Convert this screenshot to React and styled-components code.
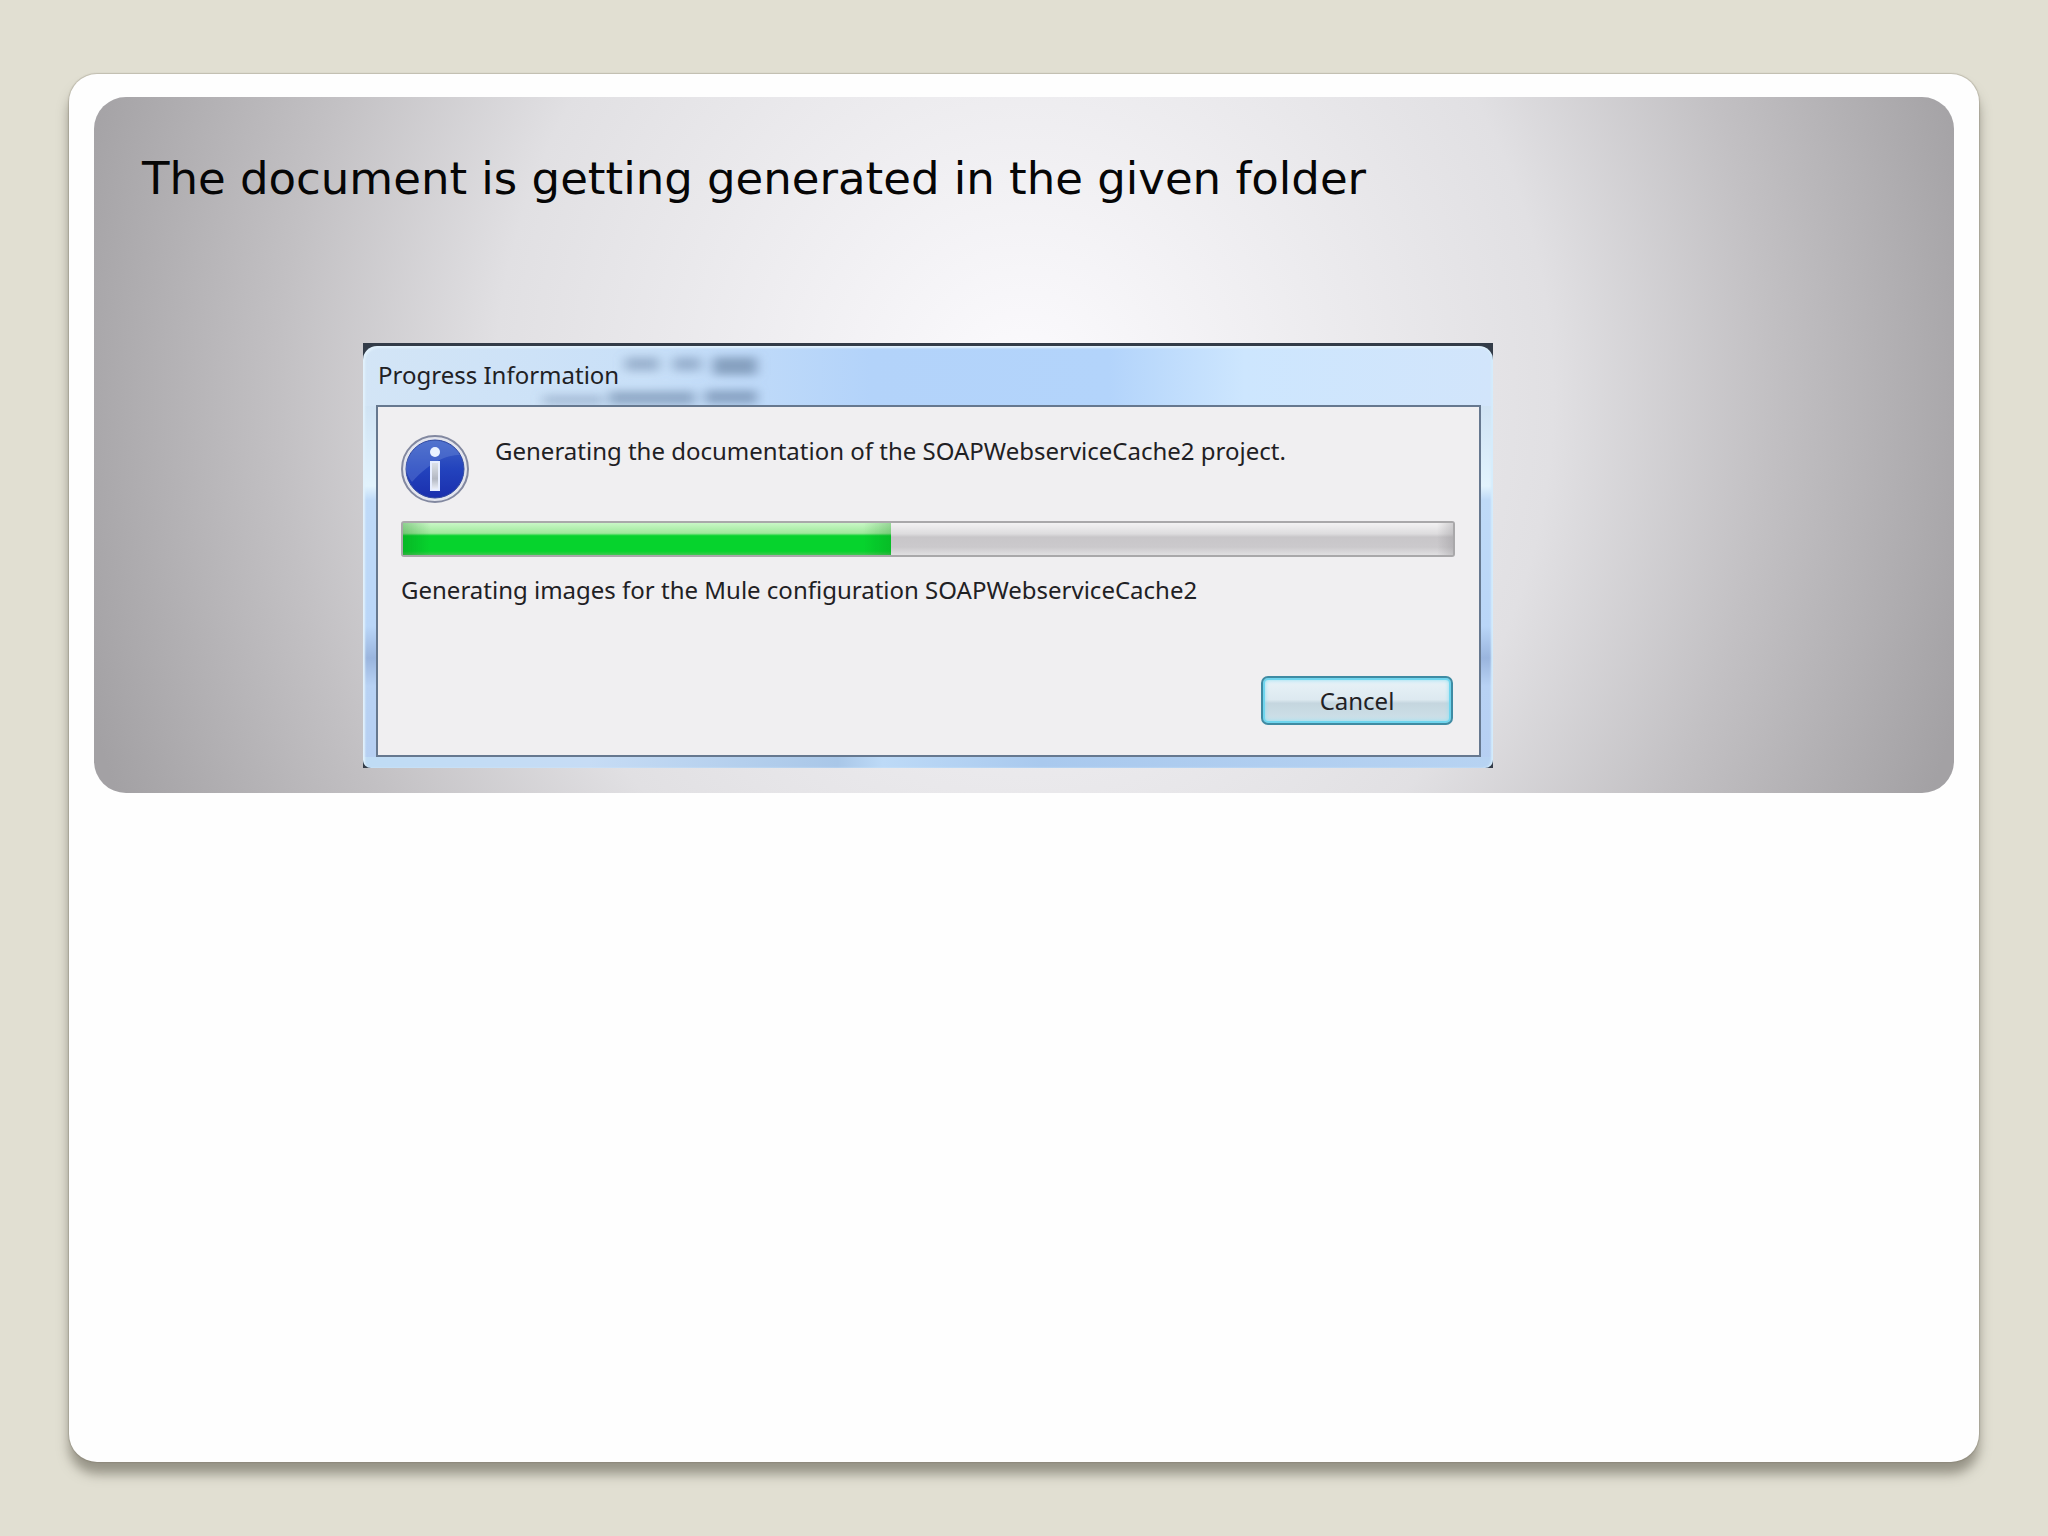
import React from 'react'
import styled, { createGlobalStyle } from 'styled-components'

const vars = {
  page: '#e1dfd2',
  ink: '#1f2124',
  titleFont: "Verdana, 'DejaVu Sans', sans-serif",
  uiFont: "'Segoe UI', 'Noto Sans', 'Open Sans', sans-serif",
}

const InfoIcon = () => (
  <svg viewBox='0 0 68 68' width='68' height='68' aria-hidden='true'>
    <defs>
      <linearGradient id='ball' x1='0' y1='0' x2='0' y2='1'>
        <stop offset='0' stopColor='#3f62c6' />
        <stop offset='0.5' stopColor='#2343bd' />
        <stop offset='1' stopColor='#1a2fae' />
      </linearGradient>
      <linearGradient id='stem' x1='0' y1='0' x2='0' y2='1'>
        <stop offset='0' stopColor='#dfe3ea' />
        <stop offset='0.6' stopColor='#b3b8c2' />
        <stop offset='1' stopColor='#eef2fb' />
      </linearGradient>
    </defs>
    <circle cx='34' cy='34' r='33' fill='#e3e5ee' stroke='#8288a0' strokeWidth='2' />
    <circle cx='34' cy='34' r='29' fill='url(#ball)' stroke='#3149a0' strokeWidth='1' />
    <path d='M5 34a29 29 0 0 1 54-14C46 20 30 26 11 47a29 29 0 0 1-6-13z' fill='#7f9be0' opacity='0.3' />
    <circle cx='34' cy='17' r='5' fill='#eaf2ff' />
    <rect x='30' y='27' width='8' height='28' fill='url(#stem)' stroke='#e6edff' strokeWidth='2' />
  </svg>
)

const ProgressDialog = ({ title, message, task, value }) => {
  return (
    <Frame>
      <Glass role='dialog' aria-labelledby='dialog-title'>
        <TitleBar>
          <Reflection viewBox='0 0 1130 59' preserveAspectRatio='xMinYMin slice' aria-hidden='true'>
            <defs>
              <filter id='smear' x='-10%' y='-50%' width='120%' height='200%'>
                <feGaussianBlur stdDeviation='6 4' />
              </filter>
            </defs>
            <g filter='url(#smear)' fill='#6d87a8'>
              <rect x='262' y='11' width='34' height='14' opacity='0.5' />
              <rect x='310' y='11' width='28' height='14' opacity='0.5' />
              <rect x='350' y='11' width='44' height='18' opacity='0.7' />
              <rect x='180' y='49' width='60' height='10' opacity='0.4' />
              <rect x='246' y='45' width='86' height='14' opacity='0.6' />
              <rect x='342' y='44' width='52' height='14' opacity='0.65' />
            </g>
          </Reflection>
          <h2 id='dialog-title'>{title}</h2>
        </TitleBar>
        <Body>
          <Message>
            <InfoIcon />
            <p>{message}</p>
          </Message>
          <Progress aria-labelledby='task' max='100' value={value} />
          <Task id='task'>{task}</Task>
          <Actions>
            <Button type='button'>Cancel</Button>
          </Actions>
        </Body>
      </Glass>
    </Frame>
  )
}

const App = () => {
  return (
    <Page>
      <GlobalStyle />
      <Slide>
        <Panel>
          <Heading>The document is getting generated in the given folder</Heading>
          <ProgressDialog
            title='Progress Information'
            message='Generating the documentation of the SOAPWebserviceCache2 project.'
            task='Generating images for the Mule configuration SOAPWebserviceCache2'
            value={46.5}
          />
        </Panel>
      </Slide>
    </Page>
  )
}

const GlobalStyle = createGlobalStyle`
* {
  box-sizing: border-box;
}

body {
  margin: 0;
  background-color: ${vars.page};
}

h1, h2, p {
  margin: 0;
  font-weight: 400;
}
`

const Page = styled.div`
display: flex;
min-height: 100vh;
padding: 74px 69px;
`

const Slide = styled.main`
flex: 1;
padding: 23px 25px;
border-radius: 28px;
background-color: #fefefe;
box-shadow: 0 0 1px 1px rgba(120, 112, 95, .3), 0 12px 12px rgba(90, 86, 72, .55);
`

const Panel = styled.section`
padding: 54px 48px 25px;
border-radius: 32px;
background: radial-gradient(ellipse 980px 1050px at 50% 43%, #fcfbfe 0%, #e1e0e3 54%, #c2c0c3 76%, #a3a1a4 100%);
`

const Heading = styled.h1`
font-family: ${vars.titleFont};
font-size: 45px;
line-height: 56px;
color: #060606;
`

const Frame = styled.div`
max-width: 1130px;
margin: 136px 0 0 221px;
padding-top: 3px;
background-color: #333c48;
`

const Glass = styled.div`
padding: 0 12px 11px 13px;
border-radius: 14px 14px 8px 8px;
background:
  linear-gradient(to right, #d3e5f6 0%, #c9e0f8 25%, #b3d3fa 45%, #b3d4fb 66%, #cde6fe 78%, #d2e5fb 100%) top / 100% 60px no-repeat,
  linear-gradient(to right, #bfdcf5 0%, #c6dcf5 20%, #a9c7e8 42%, #bddaf7 46%, #a9c9ee 60%, #b7d3f2 100%) bottom / 100% 11px no-repeat,
  linear-gradient(#d0e3f4 60px, #e2f3fd 140px, #bfdaf8 154px, #bad6f8 280px, #9ab5de 312px, #b8d2f4 340px, #b6cff2 100%);
box-shadow: inset 2px 2px 2px #e2f2fc, inset -2px 0 2px #d4ecfc;
`

const TitleBar = styled.header`
position: relative;
display: flex;
align-items: center;
height: 59px;
padding: 0 0 2px 2px;

h2 {
  position: relative;
  font-family: ${vars.uiFont};
  font-size: 24px;
  line-height: 32px;
  color: ${vars.ink};
}
`

const Reflection = styled.svg`
position: absolute;
top: 0;
left: -13px;
width: 1130px;
height: 59px;
`

const Body = styled.div`
position: relative;
padding: 28px 24px 30px 23px;
border: 2px solid #66788f;
background-color: #f0eff1;
font-family: ${vars.uiFont};
font-size: 24px;
line-height: 32px;
color: ${vars.ink};
`

const Message = styled.div`
display: flex;
gap: 26px;

svg {
  flex-shrink: 0;
}
`

const Progress = styled.progress`
display: block;
appearance: none;
width: 100%;
height: 36px;
margin-top: 18px;
border: 2px solid #a9a8aa;
border-radius: 3px;

&::-webkit-progress-bar {
  background:
    linear-gradient(to left, rgba(130, 128, 132, .3), transparent 16px),
    linear-gradient(#f3f2f3 0%, #dddcde 34%, #c8c6c9 44%, #cbc9cc 75%, #e0dfe1 100%);
}

&::-webkit-progress-value {
  background:
    linear-gradient(to right, rgba(10, 120, 20, .3), transparent 28px, transparent calc(100% - 28px), rgba(10, 120, 20, .25)),
    linear-gradient(#c9f7c6 0%, #9fe89c 32%, #06d32d 40%, #06d32d 88%, #3fc850 100%);
}
`

const Task = styled.p`
margin-top: 17px;
`

const Actions = styled.div`
display: flex;
justify-content: flex-end;
margin-top: 70px;
padding-right: 2px;
`

const Button = styled.button`
width: 192px;
height: 49px;
padding: 0;
border: 2px solid #3f8ba3;
border-radius: 7px;
background: linear-gradient(#e9f3f8 0%, #dde9f0 48%, #c5d6df 56%, #cfe2ea 100%);
box-shadow: inset 0 0 0 2px #6fd5ee, inset 0 0 4px 2px #8fe0f2;
font-family: inherit;
font-size: 24px;
line-height: 32px;
color: ${vars.ink};
cursor: pointer;

&:active {
  opacity: .8;
}
`

export default App
